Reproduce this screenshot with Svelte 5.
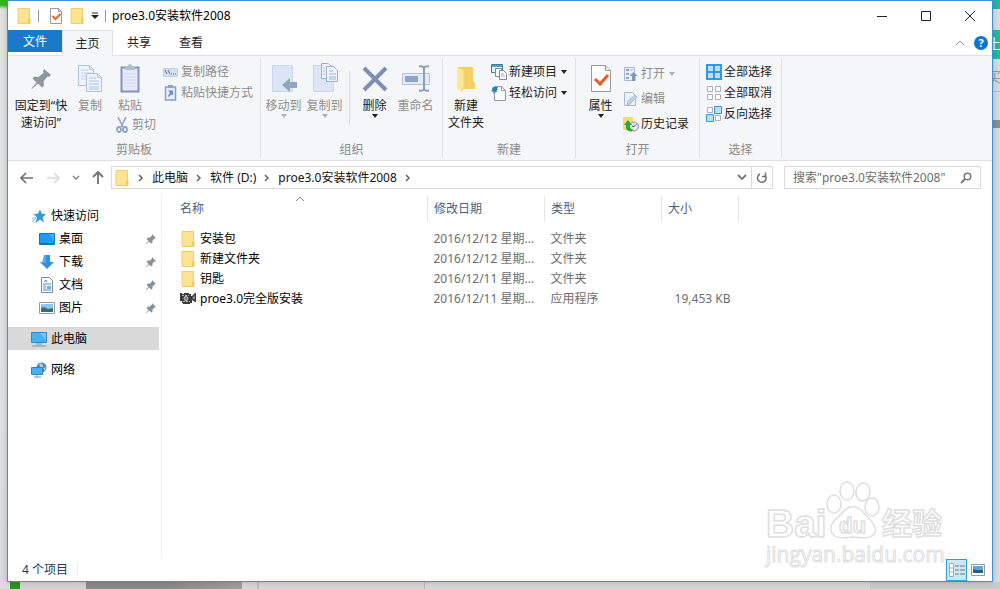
<script>
  const title = 'proe3.0安装软件2008'
  const tabs = ['主页', '共享', '查看']
  let activeTab = $state('主页')
  let view = $state('details')
  let search = $state('')

  const quick = [
    { name: '桌面', icon: 'desktop' },
    { name: '下载', icon: 'download' },
    { name: '文档', icon: 'document' },
    { name: '图片', icon: 'picture' }
  ]
  const files = [
    { name: '安装包', icon: 'folder', date: '2016/12/12 星期一', type: '文件夹', size: '' },
    { name: '新建文件夹', icon: 'folder', date: '2016/12/12 星期一', type: '文件夹', size: '' },
    { name: '钥匙', icon: 'folder', date: '2016/12/11 星期日', type: '文件夹', size: '' },
    { name: 'proe3.0完全版安装', icon: 'app', date: '2016/12/11 星期日', type: '应用程序', size: '19,453 KB' }
  ]
</script>

{#snippet icon(name)}
  {#if name === 'folder'}
    <svg width="16" height="16" viewBox="0 0 16 16"><path d="M2 .5h11.500v9.500h.5v5.500H2z" fill="#ffe394" stroke="#f0cd68" /><path d="M12 10.500h2v5h-2z" fill="#f5c94f" /></svg>
  {:else if name === 'check'}
    <svg width="14" height="16" viewBox="0 0 14 16"><path d="M1.500.5h8l3 3v12h-11z" fill="#fff" stroke="#999" /><path d="M9.500.5v3h3" fill="none" stroke="#999" /><path d="M3.500 8l3 3L11.500 6" fill="none" stroke="#e8622c" stroke-width="2" /></svg>
  {:else if name === 'pin'}
    <svg width="22" height="32" viewBox="0 0 22 32"><path d="M14 6l7 6-2 2-1.500-.5-4 5 .5 4-2 2-4-4-6 5.500-.5-.5 5-6-4-4 2-2 4 .5 5-4-.5-2z" fill="#8f979d" /></svg>
  {:else if name === 'copy'}
    <svg width="26" height="32" viewBox="0 0 26 32"><g fill="#eff3fb" stroke="#b3c1d8"><path d="M1.500 2.500h11l4 4v16h-15z" /><path d="M12.500 2.500v4h4" fill="none" /><path d="M4 7h7M4 10h10M4 13h10M4 16h10" stroke="#c3d0e6" /><path d="M9.500 10.500h11l4 4v14h-15z" /><path d="M20.500 10.500v4h4" fill="none" /><path d="M12 15h7M12 18h10M12 21h10M12 24h10M12 26h10" stroke="#afc2e2" /></g></svg>
  {:else if name === 'paste'}
    <svg width="22" height="32" viewBox="0 0 22 32"><path d="M2.500 4.500h17v24h-17z" fill="#e3ebf8" stroke="#8094bb" stroke-width="2" /><path d="M6 3h3a2 2 0 0 1 4 0h3v4H6z" fill="#b1bdd3" /><path d="M5 11h12M5 14h12M5 17h12M5 20h12M5 23h12" stroke="#d0dcef" /></svg>
  {:else if name === 'cut'}
    <svg width="16" height="16" viewBox="0 0 16 16" fill="none" stroke="#8fa2c4"><path d="M4 0l5 10M12 0L7 10" stroke-width="1.500" /><ellipse cx="5" cy="12.500" rx="2" ry="2.500" stroke-width="1.800" /><ellipse cx="11" cy="12.500" rx="2" ry="2.500" stroke-width="1.800" /></svg>
  {:else if name === 'path'}
    <svg width="16" height="16" viewBox="0 0 16 16"><path d="M.5 4.500h14v8H.5z" fill="#d3dff1" stroke="#c2cfe4" /><path d="M2 6l2 4M5 6l2 4M8 10h1M10 10h1M12 10h1" stroke="#5a6f96" fill="none" /></svg>
  {:else if name === 'shortcut'}
    <svg width="16" height="16" viewBox="0 0 16 16"><path d="M2.500 2h10v13h-10z" fill="#e6edf9" stroke="#8ba0c6" stroke-width="1.500" /><path d="M5 0h5v3H5z" fill="#8fa2c3" /><path d="M5 5.500h5v5L8.500 9 6 12 5 11 7 7.500z" fill="#7088b3" /></svg>
  {:else if name === 'moveTo'}
    <svg width="26" height="32" viewBox="0 0 26 32"><path d="M1.500 2.500h20v26h-20z" fill="#dae5f5" stroke="#cbd8ec" /><path d="M11 22l8-7v4h7v6h-7v4z" fill="#93a3c0" /></svg>
  {:else if name === 'copyTo'}
    <svg width="26" height="32" viewBox="0 0 26 32"><path d="M1.500 2.500h20v26h-20z" fill="#dae5f5" stroke="#cbd8ec" /><g fill="#f0f4fc" stroke="#9fb1d0"><path d="M9.500.5h7l3 3v12h-10z" /><path d="M14.500 3.500h7l4 4v11h-11z" /><path d="M17 8h4M17 11h7M17 14h7M17 16h7M11 5h2M11 8h2M11 11h2" /></g></svg>
  {:else if name === 'delete'}
    <svg width="26" height="32" viewBox="0 0 26 32"><path d="M2 5l22 22M24 5L2 27" stroke="#7e8fb3" stroke-width="4" /></svg>
  {:else if name === 'rename'}
    <svg width="28" height="32" viewBox="0 0 28 32"><path d="M.5 10.500h27v11H.5z" fill="#e3ebf8" stroke="#b3c3de" /><path d="M3 13h13v6H3z" fill="#8fa3c8" /><path d="M17 3.500q5-1 5 2.500 0-3.500 5-2.500M22 5v22M17 27.500q5 1 5-2.500 0 3.500 5 2.500" fill="none" stroke="#8c9dbf" stroke-width="2" /></svg>
  {:else if name === 'newFolder'}
    <svg width="20" height="32" viewBox="0 0 20 32"><path d="M2 4h15v14l2 2v6H2z" fill="#f6cf63" /><path d="M1 4l7 4v15l-2 6-5-3z" fill="#ffe699" /><path d="M8 8v15l-2 5" fill="none" stroke="#f4d77d" /></svg>
  {:else if name === 'newItem'}
    <svg width="16" height="16" viewBox="0 0 16 16"><path d="M.5.5h11v8H.5z" fill="#dfeff9" stroke="#397f9d" /><path d="M1 1h10v2H1z" fill="#58a1c0" /><path d="M4.500 4.500h6v8h-6z" fill="#fff" stroke="#888" /><path d="M8.500 6.500h4l3 3v6h-7z" fill="#fff" stroke="#888" /><path d="M10 10h3M10 12h4" stroke="#aaa" /></svg>
  {:else if name === 'easyAccess'}
    <svg width="16" height="16" viewBox="0 0 16 16"><path d="M3.500 1.500h7l4 4v10h-11z" fill="#fff" stroke="#999" /><path d="M10.500 1.500v4h4" fill="none" stroke="#999" /><path d="M2 2h5L6 4h1L5.500 6h1L2 9l1-2.500H0L1.500 4H1z" fill="#2b7db8" /></svg>
  {:else if name === 'props'}
    <svg width="22" height="32" viewBox="0 0 22 32"><path d="M1.500 2.500h14l5 5v21h-19z" fill="#fff" stroke="#999" /><path d="M15.500 2.500v5h5" fill="#eee" stroke="#999" /><path d="M5 16l5 5 8-9" fill="none" stroke="#f05a22" stroke-width="3" /></svg>
  {:else if name === 'open'}
    <svg width="16" height="16" viewBox="0 0 16 16"><path d="M1.500 1.500h10v13h-10z" fill="#edf2fa" stroke="#a9b8d1" /><path d="M3 3h3v2H3zM3 7h3v2H3zM3 11h3v2H3z" fill="#8fa3c6" /><path d="M7 4h3M7 8h2" stroke="#a6b5ce" /><path d="M10.500 6l4 4h-2v5H9v-5H7z" fill="#8196bb" /></svg>
  {:else if name === 'edit'}
    <svg width="16" height="16" viewBox="0 0 16 16"><path d="M1.500 1.500h8l3 3v10h-11z" fill="#edf2fa" stroke="#a9b8d1" /><path d="M4 14l1-4 7-6 2 2-7 7z" fill="#c3d1e8" stroke="#a6b8d6" /></svg>
  {:else if name === 'history'}
    <svg width="16" height="16" viewBox="0 0 16 16"><path d="M0 1h10v13H0z" fill="#f9d976" /><circle cx="11" cy="10.500" r="4.500" fill="#e5e7ea" stroke="#88909a" /><path d="M11 10.500l2.500-2M11 10.500H9" fill="none" stroke="#666" /><path d="M9 15.500Q2 16 3 9H1l4-5 4 5H7q-1 4 3 4.500z" fill="#2fa63a" /></svg>
  {:else if name === 'selectAll'}
    <svg width="16" height="16" viewBox="0 0 16 16"><path d="M1 1h14v14H1zM8 1v14M1 8h14" fill="#b7e0fb" stroke="#3596e6" stroke-width="2" /></svg>
  {:else if name === 'selectNone'}
    <svg width="16" height="16" viewBox="0 0 16 16"><path d="M1.500 1.500h5v5h-5zM9.500 1.500h5v5h-5zM1.500 9.500h5v5h-5zM9.500 9.500h5v5h-5z" fill="#fff" stroke="#b0b0b0" /></svg>
  {:else if name === 'selectInvert'}
    <svg width="16" height="16" viewBox="0 0 16 16"><path d="M1.500 1.500h5v5h-5zM9.500 9.500h5v5h-5z" fill="#fff" stroke="#b0b0b0" /><path d="M8.500.5h7v7h-7zM.5 8.500h7v7h-7z" fill="#b7e0fb" stroke="#3596e6" /></svg>
  {:else if name === 'star'}
    <svg width="16" height="16" viewBox="0 0 16 16"><path d="M9 1.500l1.700 4.200 4.300.3-3.300 3.300 1.300 5.200-4-3-4.500 3.500L6 9.500 3 6l4-.5z" fill="#2f9de4" /><path d="M1 10.500l4-1M1 13.500l4-3M2 6.500l3 1" stroke="#7fc1ee" /></svg>
  {:else if name === 'desktop'}
    <svg width="16" height="16" viewBox="0 0 16 16"><path d="M.5 2.500h15v11H.5z" fill="#1d9bf6" stroke="#1275c2" /><path d="M1 12h14v1H1z" fill="#0b6cb5" /><path d="M10 3h5v7z" fill="#3fb0ff" /></svg>
  {:else if name === 'download'}
    <svg width="16" height="16" viewBox="0 0 16 16"><path d="M5 1h6v7h4l-7 7-7-7h4z" fill="#318fe0" /><path d="M5 1h2v8H3z" fill="#56a8ec" /></svg>
  {:else if name === 'document'}
    <svg width="16" height="16" viewBox="0 0 16 16"><path d="M2.500.5h8l3 3v12h-11z" fill="#fff" stroke="#838a90" /><path d="M5 5l2-2 1 2M4 7h8M4 9h3M4 11h3M4 13h8" fill="none" stroke="#3f92cf" /><path d="M8 9h4v3H8z" fill="#73b1dc" /></svg>
  {:else if name === 'picture'}
    <svg width="16" height="16" viewBox="0 0 16 16"><path d="M.5 2.500h15v11H.5z" fill="#fff" stroke="#9a9a9a" /><path d="M2 4h12v8H2z" fill="#8cc6f4" /><path d="M2 8l3-1 4 2 5-1v4H2z" fill="#3b6f6c" /><path d="M2 11h12v1H2z" fill="#2f65ad" /></svg>
  {:else if name === 'pc'}
    <svg width="16" height="16" viewBox="0 0 16 16"><path d="M.5 1.500h15v10H.5z" fill="#41b2f7" stroke="#3d86b8" /><path d="M9 2h6v7z" fill="#74c9fc" /><path d="M5 13h6M1 15h14" stroke="#6d95b3" /></svg>
  {:else if name === 'network'}
    <svg width="16" height="16" viewBox="0 0 16 16"><circle cx="10.500" cy="5.500" r="5" fill="#55809f" /><path d="M8 2q3-2 4 1t-3 2zM12 6l3-1-1 4z" fill="#a9cde2" /><path d="M.5 5.500h11v7H.5z" fill="#42b3f8" stroke="#2f84bd" /><path d="M3 15h7M6 13v2" stroke="#6d95b3" /></svg>
  {:else if name === 'app'}
    <svg width="16" height="16" viewBox="0 0 16 16"><path d="M0 2h2v1h2V2h5v1h2v2h1l3-3h1v9h-1l-3-2v3h-2v1H3v-1H2v-2H0z" fill="#3a3a3a" /><path d="M2 4.500h7M3 10.500h7" stroke="#bbb" stroke-dasharray="2 1" /><circle cx="6" cy="7.500" r="2" fill="#777" stroke="#ccc" /><path d="M12 7l3-3v5z" fill="#789082" /></svg>
  {/if}
{/snippet}

{#snippet caret()}
  <svg class="caret" width="6" height="4" viewBox="0 0 6 4"><path d="M0 0h6L3 4z" fill="currentColor" /></svg>
{/snippet}

{#snippet large(name, label, size, disabled = false, drop = false)}
  <button class="large {size}" class:off={disabled} aria-disabled={disabled}>
    {@render icon(name)}
    <span>{label}</span>
    {#if drop}{@render caret()}{/if}
  </button>
{/snippet}

{#snippet small(name, label, disabled = false, drop = false)}
  <button class="small" class:off={disabled} aria-disabled={disabled}>
    {@render icon(name)}
    <span>{label}</span>
    {#if drop}{@render caret()}{/if}
  </button>
{/snippet}

{#snippet chevron()}
  <svg width="6" height="8" viewBox="0 0 6 8"><path d="M1 1l3 3-3 3" fill="none" stroke="#666" stroke-width="1.500" /></svg>
{/snippet}

<div class="page">
  <div class="behind-left"></div>
  <div class="window">
    <header class="titlebar">
      {@render icon('folder')}
      <i class="bar"></i>
      <button aria-label="属性">{@render icon('check')}</button>
      <button aria-label="新建文件夹">{@render icon('folder')}</button>
      <button aria-label="自定义快速访问工具栏">
        <svg width="8" height="8" viewBox="0 0 8 8"><path d="M1 1h6" stroke="#222" /><path d="M0 3h8L4 7z" fill="#222" /></svg>
      </button>
      <i class="bar"></i>
      <h1>{title}</h1>
      <div class="controls">
        <button aria-label="最小化"><svg width="12" height="12" viewBox="0 0 12 12"><path d="M1 6.500h10" stroke="#222" /></svg></button>
        <button aria-label="最大化"><svg width="12" height="12" viewBox="0 0 12 12"><path d="M1.500 1.500h9v9h-9z" fill="none" stroke="#222" /></svg></button>
        <button aria-label="关闭"><svg width="12" height="12" viewBox="0 0 12 12"><path d="M1 1l10 10M11 1L1 11" stroke="#222" /></svg></button>
      </div>
    </header>

    <nav class="tabs">
      <button class="file">文件</button>
      {#each tabs as tab}
        <button class:active={activeTab === tab} onclick={() => (activeTab = tab)}>{tab}</button>
      {/each}
      <div class="help">
        <button aria-label="最小化功能区"><svg width="10" height="6" viewBox="0 0 10 6"><path d="M1 5l4-4 4 4" fill="none" stroke="#999" /></svg></button>
        <button class="question" aria-label="帮助">?</button>
      </div>
    </nav>

    <section class="ribbon">
      <div class="group clipboard">
        <div class="tools">
          {@render large('pin', '固定到“快\n速访问”', 'wide')}
          {@render large('copy', '复制', 'mid', true)}
          <div class="stack">
            {@render large('paste', '粘贴', 'mid', true)}
            <div class="cut">{@render small('cut', '剪切', true)}</div>
          </div>
          <div class="column">
            {@render small('path', '复制路径', true)}
            {@render small('shortcut', '粘贴快捷方式', true)}
          </div>
        </div>
        <div class="caption">剪贴板</div>
      </div>
      <div class="group organize">
        <div class="tools">
          {@render large('moveTo', '移动到', 'mid', true, true)}
          {@render large('copyTo', '复制到', 'mid', true, true)}
          <i class="split"></i>
          {@render large('delete', '删除', 'mid', false, true)}
          {@render large('rename', '重命名', 'mid', true)}
        </div>
        <div class="caption">组织</div>
      </div>
      <div class="group create">
        <div class="tools">
          {@render large('newFolder', '新建\n文件夹', 'mid')}
          <div class="column">
            {@render small('newItem', '新建项目', false, true)}
            {@render small('easyAccess', '轻松访问', false, true)}
          </div>
        </div>
        <div class="caption">新建</div>
      </div>
      <div class="group opening">
        <div class="tools">
          {@render large('props', '属性', 'mid', false, true)}
          <div class="column roomy">
            {@render small('open', '打开', true, true)}
            {@render small('edit', '编辑', true)}
            {@render small('history', '历史记录')}
          </div>
        </div>
        <div class="caption">打开</div>
      </div>
      <div class="group select">
        <div class="tools">
          <div class="column">
            {@render small('selectAll', '全部选择')}
            {@render small('selectNone', '全部取消')}
            {@render small('selectInvert', '反向选择')}
          </div>
        </div>
        <div class="caption">选择</div>
      </div>
    </section>

    <div class="location">
      <div class="history">
        <button aria-label="后退"><svg width="14" height="12" viewBox="0 0 14 12"><path d="M6 1L1 6l5 5M1 6h12" fill="none" stroke="#707070" stroke-width="1.600" /></svg></button>
        <button aria-label="前进"><svg width="14" height="12" viewBox="0 0 14 12"><path d="M8 1l5 5-5 5M13 6H1" fill="none" stroke="#d8d8d8" stroke-width="1.600" /></svg></button>
        <button aria-label="最近浏览的位置"><svg width="8" height="6" viewBox="0 0 8 6"><path d="M1 1l3 3 3-3" fill="none" stroke="#888" stroke-width="1.500" /></svg></button>
        <button aria-label="上移"><svg width="12" height="14" viewBox="0 0 12 14"><path d="M1 6l5-5 5 5M6 1v12" fill="none" stroke="#707070" stroke-width="1.800" /></svg></button>
      </div>
      <div class="address">
        {@render icon('folder')}
        {@render chevron()}
        <a href="#pc">此电脑</a>
        {@render chevron()}
        <a href="#d">软件 (D:)</a>
        {@render chevron()}
        <a href="#here">{title}</a>
        {@render chevron()}
        <button class="drop" aria-label="以前的位置"><svg width="10" height="7" viewBox="0 0 10 7"><path d="M1 1l4 4 4-4" fill="none" stroke="#777" stroke-width="1.800" /></svg></button>
        <button class="refresh" aria-label="刷新"><svg width="12" height="12" viewBox="0 0 12 12"><path d="M4 2A4.300 4.300 0 1 0 9 3M6 4.500h3.500V.5" fill="none" stroke="#707070" stroke-width="1.500" /></svg></button>
      </div>
      <label class="search">
        <input type="text" aria-label="搜索" placeholder={`搜索"${title}"`} bind:value={search} />
        <svg width="12" height="12" viewBox="0 0 12 12"><circle cx="7.500" cy="4.500" r="3.300" fill="none" stroke="#777" stroke-width="1.500" /><path d="M5 7l-4 4" stroke="#777" stroke-width="2" /></svg>
      </label>
    </div>

    <div class="body">
      <nav class="tree">
        <a href="#quick">{@render icon('star')}<span>快速访问</span></a>
        {#each quick as item}
          <a class="child" href="#{item.icon}">
            {@render icon(item.icon)}<span>{item.name}</span>
            <svg class="tack" width="10" height="10" viewBox="0 0 10 10"><path d="M6 0l4 4-1.500.5-2 2 0 2L5 9.500 3 7.500.5 10 0 9.500 2.500 7l-2-2L2 3.500l2 0 2-2z" fill="#8a9199" /></svg>
          </a>
        {/each}
        <a class="root current" href="#pc">{@render icon('pc')}<span>此电脑</span></a>
        <a class="root" href="#network">{@render icon('network')}<span>网络</span></a>
      </nav>

      <main>
        <table>
          <thead>
            <tr>
              <th class="name">
                <svg class="sort" width="10" height="6" viewBox="0 0 10 6"><path d="M1 5l4-4 4 4" fill="none" stroke="#888" /></svg>
                <button>名称</button>
              </th>
              <th class="date"><button>修改日期</button></th>
              <th class="type"><button>类型</button></th>
              <th class="size"><button>大小</button></th>
            </tr>
          </thead>
          <tbody>
            {#each files as file}
              <tr>
                <td class="name"><div>{@render icon(file.icon)}<span>{file.name}</span></div></td>
                <td>{file.date.slice(0, -1)}...</td>
                <td>{file.type}</td>
                <td class="num">{file.size}</td>
              </tr>
            {/each}
          </tbody>
        </table>
      </main>

      <svg class="watermark" width="190" height="96" viewBox="0 0 190 96">
        <g fill="#fff" stroke="#dedede" stroke-width="1.500">
          <ellipse cx="74" cy="28" rx="7" ry="9" />
          <ellipse cx="87" cy="15" rx="7" ry="9" />
          <ellipse cx="103" cy="16" rx="7" ry="9" transform="rotate(8 103 16)" />
          <ellipse cx="112" cy="31" rx="7" ry="9" />
          <path d="M83 36q10-11 20 0l9 10q7 9 0 14-4 3-19 1-14 2-18-1-8-6-1-15z" />
          <text class="bai" x="6" y="61">Bai</text>
          <text class="du" x="79" y="57">du</text>
          <text class="cn" x="122" y="58">经验</text>
          <text class="url" x="6" y="86">jingyan.baidu.com</text>
        </g>
      </svg>
    </div>

    <footer>
      <span>4 个项目</span>
      <div class="views">
        <button class:on={view === 'details'} aria-label="详细信息" onclick={() => (view = 'details')}>
          <svg width="16" height="14" viewBox="0 0 16 14"><path d="M.5.5h4v13h-4zM.5 5h4M.5 9h4" fill="#fff" stroke="#aaa" /><path d="M6 3h4M11 3h5M6 7h4M11 7h5M6 11h4M11 11h5" stroke="#777" /></svg>
        </button>
        <button class:on={view === 'icons'} aria-label="大缩略图" onclick={() => (view = 'icons')}>
          <svg width="14" height="12" viewBox="0 0 14 12"><path d="M.5.5h13v11H.5z" fill="#fff" stroke="#999" /><path d="M2 2h10v7H2z" fill="#5da7e8" /><path d="M2 5l4 1 6 0v3H2z" fill="#2c6173" /></svg>
        </button>
      </div>
    </footer>
  </div>
  <div class="behind-right">
    <div class="teal top"></div>
    <div class="tab-edge"></div>
    <div class="teal mid"><span>土</span></div>
    <div class="link"><span>买</span></div>
    <div class="line"></div>
    <div class="thumb"></div>
  </div>
  <div class="behind-bottom"></div>
</div>

<style>
  :global(body) {
    margin: 0;
    background: #dcdcde;
  }
  .page {
    display: grid;
    grid-template-columns: 7px minmax(0, 1fr) 7px;
    grid-template-rows: 1fr 7px;
    min-height: 100vh;
    font: 12px/16px "Noto Sans", "Noto Sans CJK SC", sans-serif;
    color: #222;
  }
  button, input {
    font: inherit;
    color: inherit;
    border: 0;
    padding: 0;
    margin: 0;
    background: none;
  }
  a {
    color: inherit;
    text-decoration: none;
  }
  svg {
    display: block;
    flex: none;
  }
  .window {
    display: flex;
    flex-direction: column;
    background: #fff;
    border: 1px solid #3c91d8;
    box-shadow: 0 0 6px rgba(0, 0, 0, 0.2);
    z-index: 1;
  }

  /* title bar */
  .titlebar {
    display: flex;
    align-items: center;
    gap: 6px;
    height: 29px;
    padding-left: 8px;
  }
  .titlebar h1 {
    margin: 0;
    font-size: 12px;
    font-weight: 400;
    color: #000;
  }
  .bar {
    width: 1px;
    height: 12px;
    background: #999;
  }
  .bar:first-of-type {
    margin-right: 4px;
  }
  .controls {
    display: flex;
    margin-left: auto;
  }
  .controls button {
    display: flex;
    align-items: center;
    justify-content: center;
    width: 44px;
    height: 28px;
  }

  /* tabs */
  .tabs {
    display: flex;
    height: 25px;
    border-bottom: 1px solid #dfe0e1;
  }
  .tabs > button {
    width: 52px;
    height: 25px;
  }
  .tabs > button.file {
    width: 54px;
    height: 22px;
    padding-top: 2px;
    background: #1979ca;
    color: #fff;
  }
  .tabs > button.active {
    width: 51px;
    height: 26px;
    border: 1px solid #dfe0e1;
    border-bottom: 0;
    background: #f5f6f7;
  }
  .help {
    display: flex;
    align-items: center;
    gap: 9px;
    margin-left: auto;
    padding-right: 4px;
  }
  .help .question {
    width: 14px;
    height: 14px;
    border-radius: 50%;
    background: #0f73cf;
    color: #fff;
    font-size: 11px;
    font-weight: 700;
    line-height: 14px;
  }

  /* ribbon */
  .ribbon {
    display: flex;
    padding: 2px 0;
    background: #f5f6f7;
    border-bottom: 1px solid #dfe0e1;
  }
  .group {
    display: flex;
    flex-direction: column;
    box-sizing: border-box;
    border-right: 1px solid #e0e2e4;
  }
  .tools {
    display: flex;
    height: 81px;
    padding-top: 3px;
  }
  .caption {
    color: #8a8a8a;
    text-align: center;
  }
  .clipboard {
    width: 253px;
  }
  .organize {
    width: 182px;
  }
  .create {
    width: 133px;
  }
  .opening {
    width: 124px;
  }
  .select {
    width: 82px;
  }
  .clipboard .tools, .opening .tools, .select .tools {
    padding-left: 4px;
  }
  .organize .tools {
    padding-left: 2px;
  }
  .large {
    display: flex;
    flex-direction: column;
    align-items: center;
    gap: 2px;
    align-self: flex-start;
    padding-top: 2px;
    line-height: 17px;
    white-space: pre-line;
  }
  .large .caret {
    margin-top: -2px;
  }
  .mid {
    width: 41px;
  }
  .wide {
    width: 58px;
  }
  .clipboard .mid {
    width: 40px;
  }
  .create .mid {
    width: 46px;
  }
  .small {
    display: flex;
    align-items: center;
    gap: 2px;
    height: 21px;
    padding: 0 2px;
    white-space: nowrap;
  }
  .small .caret {
    margin-left: 2px;
  }
  .roomy .small {
    height: 25px;
  }
  .off {
    color: #8d8d8d;
  }
  .off .caret {
    color: #b0b0b0;
  }
  .cut {
    padding-left: 2px;
  }
  .stack {
    width: 51px;
  }
  .split {
    width: 1px;
    height: 53px;
    margin: 10px 4px 0;
    background: #dcdfe2;
  }

  /* address row */
  .location {
    display: flex;
    gap: 11px;
    padding: 5px 11px 4px 12px;
  }
  .history {
    display: flex;
    align-items: center;
    gap: 12px;
    margin-right: -4px;
  }
  .address {
    display: flex;
    flex: 1;
    align-items: center;
    gap: 8px;
    height: 21px;
    padding-left: 2px;
    border: 1px solid #d9d9d9;
    color: #111;
  }
  .address .drop {
    margin-left: auto;
    margin-right: -4px;
  }
  .refresh {
    align-self: stretch;
    padding: 0 4px;
    border-left: 1px solid #d9d9d9;
  }
  .search {
    display: flex;
    align-items: center;
    box-sizing: border-box;
    width: 197px;
    padding: 0 8px;
    border: 1px solid #d9d9d9;
  }
  .search input {
    flex: 1;
    min-width: 0;
    outline: 0;
  }
  .search input::placeholder {
    color: #6d6d6d;
  }

  /* content */
  .body {
    position: relative;
    display: flex;
    flex: 1;
  }
  .tree {
    display: flex;
    flex-direction: column;
    box-sizing: border-box;
    width: 154px;
    padding: 11px 2px 0 0;
    border-right: 1px solid #f0f0f0;
  }
  .tree a {
    display: flex;
    align-items: center;
    gap: 4px;
    height: 23px;
    padding-left: 23px;
    color: #000;
  }
  .tree a.child {
    padding-left: 31px;
  }
  .tree a.root {
    margin-top: 8px;
  }
  .tree a.current {
    background: #d9d9d9;
  }
  .tree .tack {
    margin-left: auto;
    margin-right: 3px;
  }
  main {
    flex: 1;
    padding: 3px 0 0 10px;
  }
  table {
    table-layout: fixed;
    border-collapse: collapse;
    width: 567px;
  }
  th {
    position: relative;
    height: 26px;
    padding: 0 0 0 6px;
    border-right: 1px solid #e5e5e5;
    color: #4c607a;
    font-weight: 400;
    text-align: left;
  }
  th.name {
    width: 247px;
    padding-left: 8px;
  }
  th.date, th.type {
    width: 110px;
  }
  .sort {
    position: absolute;
    top: 0;
    left: 50%;
    margin-left: -5px;
  }
  tbody::before {
    content: "";
    display: block;
    height: 7px;
  }
  td {
    height: 20px;
    padding: 0 0 0 6px;
    color: #6d6d6d;
    white-space: nowrap;
  }
  td.name {
    padding-left: 8px;
    color: #000;
  }
  td.name div {
    display: flex;
    align-items: center;
    gap: 4px;
  }
  td.num {
    padding-right: 8px;
    text-align: right;
  }
  .watermark {
    position: absolute;
    right: 42px;
    bottom: -13px;
    pointer-events: none;
  }
  .bai {
    font: 700 39px "Liberation Sans", sans-serif;
  }
  .du {
    font: 700 22px "Liberation Sans", sans-serif;
  }
  .cn {
    font: 700 30px "Noto Sans CJK SC", sans-serif;
  }
  .url {
    font: 21px "Open Sans", sans-serif;
    stroke-width: 1px;
  }

  /* status bar */
  footer {
    display: flex;
    align-items: center;
    height: 22px;
    padding: 0 4px 0 14px;
    color: #1e395b;
  }
  footer > span {
    padding-right: 9px;
    border-right: 1px solid #eee;
  }
  .views {
    display: flex;
    margin-left: auto;
  }
  .views button {
    display: flex;
    align-items: center;
    justify-content: center;
    box-sizing: border-box;
    width: 21px;
    height: 22px;
    border: 1px solid transparent;
  }
  .views button.on {
    border-color: #26a0da;
    background: #cbe8f6;
  }

  /* what shows round the window */
  .behind-left {
    background: linear-gradient(#35b71c 5px, #dfe2df 9px, #e0e1e4 60%, #d9dadd);
  }
  .behind-right {
    overflow: hidden;
    background: #dadada;
    color: #999;
  }
  .behind-right span {
    display: block;
    margin-left: -6px;
    width: 16px;
    font-size: 14px;
  }
  .teal {
    background: #1fbb9b;
    color: #fff;
  }
  .top {
    height: 9px;
  }
  .tab-edge {
    height: 21px;
    background: #dcdcdc;
  }
  .mid.teal {
    box-sizing: border-box;
    width: auto;
    height: 29px;
    padding-top: 6px;
  }
  .link {
    height: 22px;
    padding-top: 10px;
  }
  .line {
    height: 28px;
    border-top: 1px solid #bbb;
  }
  .thumb {
    height: 8px;
    background: #8d8d8d;
  }
  .behind-bottom {
    grid-column: 1 / -1;
    background: linear-gradient(90deg, #dcdde0 10px, #279524 10px 20px, #d5d3d3 20px 86px, #8b8a8a 86px 166px, #a09f9e 242px, #d8d6d6 242px 257px, #bbb 257px 259px, #d8d6d6 259px 424px, #bbb 424px 425px, #d8d7d7 425px 87%, #cacaca 87%);
  }
</style>
